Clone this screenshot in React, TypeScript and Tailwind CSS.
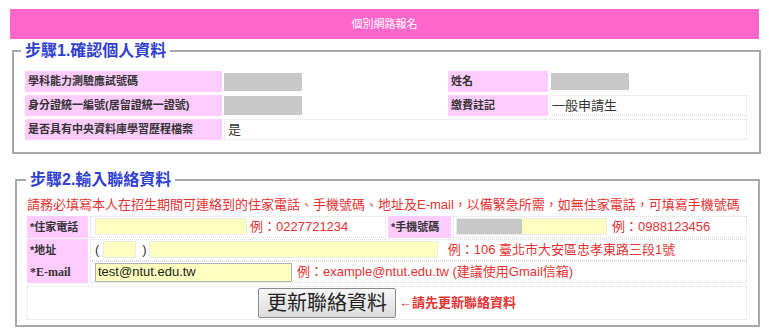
import React from "react";

const F = { fontFamily: '"Liberation Sans", "Noto Sans CJK TC", sans-serif' };

function Cell({ className = "", children }: { className?: string; children?: React.ReactNode }) {
  return (
    <div className={`flex items-center border border-dotted border-[#dcdcdc] ${className}`}>{children}</div>
  );
}

function Label({ children, className = "" }: { children: React.ReactNode; className?: string }) {
  return (
    <div className={`flex items-center bg-[#ffccff] pl-[3px] text-[11px] font-bold text-[#333] ${className}`}>{children}</div>
  );
}

export default function App() {
  return (
    <div className="w-[769px] h-[335px] bg-white overflow-hidden" style={F}>
      <div className="mx-[10px] mt-[9px] h-[30px] bg-[#ff66cc] flex items-center justify-center text-white text-[11px]">
        個別網路報名
      </div>

      {/* Step 1 */}
      <fieldset className="ml-[12px] w-[749px] mt-[2px] border-2 border-[#a8a8a8] pl-[11px] pb-[12px]">
        <legend className="-ml-[4px] px-[4px] text-[16px] leading-[20px] font-bold text-[#2f3fd0]">步驟1.確認個人資料</legend>
        <div className="mt-[10px] w-[722px] grid grid-cols-[197px_222px_100px_197px] gap-x-[2px] gap-y-[3px]">
          <Label className="h-[21px]">學科能力測驗應試號碼</Label>
          <Cell className="h-[21px] border-0">
            <div className="w-[78px] h-[18px] bg-[#c8c8c8]" />
          </Cell>
          <Label className="h-[21px]">姓名</Label>
          <Cell className="h-[21px] border-0 pl-[1px]">
            <div className="w-[78px] h-[17px] bg-[#c8c8c8]" />
          </Cell>

          <Label className="h-[21px]">身分證統一編號(居留證統一證號)</Label>
          <Cell className="h-[21px] border-0">
            <div className="w-[78px] h-[19px] bg-[#c8c8c8]" />
          </Cell>
          <Label className="h-[21px]">繳費註記</Label>
          <Cell className="h-[21px] pl-[1px] text-[13px] text-[#333]">一般申請生</Cell>

          <Label className="h-[21px]">是否具有中央資料庫學習歷程檔案</Label>
          <Cell className="h-[21px] col-span-3 pl-[3px] text-[13px] text-[#333]">是</Cell>
        </div>
      </fieldset>

      {/* Step 2 */}
      <fieldset className="ml-[15px] w-[745px] mt-[16px] border-2 border-[#a8a8a8] pl-[10px] pb-[5px]">
        <legend className="-ml-[1px] px-[4px] text-[16px] leading-[20px] font-bold text-[#2f3fd0]">步驟2.輸入聯絡資料</legend>
        <div className="w-[720px]">
          <div className="mt-[6px] h-[18px] flex items-center text-[13px] text-[#e53333] whitespace-nowrap">
            請務必填寫本人在招生期間可連絡到的住家電話、手機號碼、地址及E-mail，以備緊急所需，如無住家電話，可填寫手機號碼
          </div>

          <div className="mt-[2px] h-[20px] grid grid-cols-[61px_296px_63px_294px] gap-x-[2px]">
            <Label>*住家電話</Label>
            <Cell className="pl-[4px]">
              <div className="w-[152px] h-[17px] bg-[#ffffbf] border border-[#eaeaea]" />
              <span className="ml-[3px] text-[13px] text-[#e53333]">例：0227721234</span>
            </Cell>
            <Label>*手機號碼</Label>
            <Cell className="pl-[2px]">
              <div className="w-[151px] h-[17px] bg-[#ffffbf] border border-[#eaeaea] flex">
                <div className="w-[65px] h-full bg-[#c8c8c8]" />
              </div>
              <span className="ml-[5px] text-[13px] text-[#e53333]">例：0988123456</span>
            </Cell>
          </div>

          <div className="mt-[3px] h-[20px] grid grid-cols-[61px_657px] gap-x-[2px]">
            <Label>*地址</Label>
            <Cell className="pl-[4px] text-[13px] text-[#333]">
              <span>(</span>
              <div className="ml-[4px] w-[33px] h-[17px] bg-[#ffffbf] border border-[#eaeaea]" />
              <span className="ml-[6px]">)</span>
              <div className="ml-[2px] w-[289px] h-[17px] bg-[#ffffbf] border border-[#eaeaea]" />
              <span className="ml-[10px] text-[#e53333]">例：106 臺北市大安區忠孝東路三段1號</span>
            </Cell>
          </div>

          <div className="mt-[2px] h-[22px] grid grid-cols-[61px_657px] gap-x-[2px]">
            <Label className="text-[12px]">
              <span style={{ fontFamily: '"Liberation Serif", serif' }}>*E-mail</span>
            </Label>
            <Cell className="pl-[4px]">
              <div className="w-[197px] h-[19px] bg-[#ffffbf] border border-[#b0b0b0] flex items-center pl-[2px] text-[13px] text-[#222]">
                test@ntut.edu.tw
              </div>
              <span className="ml-[5px] text-[13px] text-[#e53333]">例：example@ntut.edu.tw (建議使用Gmail信箱)</span>
            </Cell>
          </div>

          <div className="mt-[3px] h-[34px] flex items-center justify-center border border-dotted border-[#dcdcdc]">
            <button className="h-[30px] px-[8px] rounded-[2px] border border-[#8a8a8a] bg-gradient-to-b from-[#f6f6f6] to-[#dcdcdc] text-[20px] leading-[28px] text-[#222]">
              更新聯絡資料
            </button>
            <span className="ml-[3px] text-[13px] font-bold text-[#e53333]">←請先更新聯絡資料</span>
          </div>
        </div>
      </fieldset>
    </div>
  );
}
